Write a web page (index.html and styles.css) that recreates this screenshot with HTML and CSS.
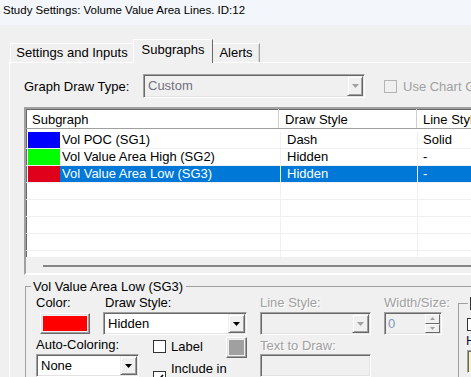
FILE: index.html
```html
<!DOCTYPE html>
<html lang="en">
<head>
    <meta charset="UTF-8">
    <title>Study Settings</title>
    <link rel="stylesheet" href="styles.css">
</head>
<body>
    <div class="titlebar">Study Settings: Volume Value Area Lines. ID:12</div>

    <div class="tabs">
        <div class="tab tab-settings">Settings and Inputs</div>
        <div class="tab tab-subgraphs selected">Subgraphs</div>
        <div class="tab tab-alerts">Alerts</div>
    </div>

    <div class="panel">
        <div class="draw-type">
            <span class="draw-type-label">Graph Draw Type:</span>
            <div class="combo disabled combo-type">
                <span class="combo-text">Custom</span>
                <span class="drop"><svg width="7" height="4"><polygon points="0,0 7,0 3.5,4"/></svg></span>
            </div>
            <div class="check disabled check-chart">
                <span class="box"></span>
                <span>Use Chart Graph Draw Type</span>
            </div>
        </div>

        <div class="listview">
            <div class="lv-head">
                <div class="lv-hcell">Subgraph</div>
                <div class="lv-hcell">Draw Style</div>
                <div class="lv-hcell">Line Style</div>
            </div>
            <div class="lv-body">
                <div class="lv-row">
                    <div class="lv-cell c1"><span class="swatch blue"></span><span class="name">Vol POC (SG1)</span></div>
                    <div class="lv-cell c2">Dash</div>
                    <div class="lv-cell c3">Solid</div>
                </div>
                <div class="lv-row">
                    <div class="lv-cell c1"><span class="swatch green"></span><span class="name">Vol Value Area High (SG2)</span></div>
                    <div class="lv-cell c2">Hidden</div>
                    <div class="lv-cell c3">-</div>
                </div>
                <div class="lv-row selected">
                    <div class="lv-cell c1"><span class="swatch red"></span><span class="name">Vol Value Area Low (SG3)</span></div>
                    <div class="lv-cell c2">Hidden</div>
                    <div class="lv-cell c3">-</div>
                </div>
                <div class="lv-row"><div class="lv-cell c1"></div><div class="lv-cell c2"></div><div class="lv-cell c3"></div></div>
                <div class="lv-row"><div class="lv-cell c1"></div><div class="lv-cell c2"></div><div class="lv-cell c3"></div></div>
                <div class="lv-row"><div class="lv-cell c1"></div><div class="lv-cell c2"></div><div class="lv-cell c3"></div></div>
                <div class="lv-row"><div class="lv-cell c1"></div><div class="lv-cell c2"></div><div class="lv-cell c3"></div></div>
                <div class="lv-row"><div class="lv-cell c1"></div><div class="lv-cell c2"></div><div class="lv-cell c3"></div></div>
            </div>
            <div class="hscroll"><div class="thumb"></div></div>
        </div>

        <fieldset class="group">
            <legend>Vol Value Area Low (SG3)</legend>
            <div class="fields">
                <span class="lbl f-color-lbl">Color:</span>
                <span class="lbl f-style-lbl">Draw Style:</span>
                <span class="lbl dim f-line-lbl">Line Style:</span>
                <span class="lbl dim f-width-lbl">Width/Size:</span>

                <div class="color-btn f-color"><span class="color-fill"></span></div>
                <div class="combo f-style">
                    <span class="combo-text">Hidden</span>
                    <span class="drop"><svg width="7" height="4"><polygon points="0,0 7,0 3.5,4"/></svg></span>
                </div>
                <div class="combo disabled f-line">
                    <span class="combo-text"></span>
                    <span class="drop"><svg width="7" height="4"><polygon points="0,0 7,0 3.5,4"/></svg></span>
                </div>
                <div class="spin f-width">
                    <span class="spin-text">0</span>
                    <span class="spin-btns">
                        <span class="spin-btn"><svg width="5" height="3"><polygon points="0,3 5,3 2.5,0"/></svg></span>
                        <span class="spin-btn"><svg width="5" height="3"><polygon points="0,0 5,0 2.5,3"/></svg></span>
                    </span>
                </div>

                <span class="lbl f-auto-lbl">Auto-Coloring:</span>
                <div class="check f-label"><span class="box"></span><span>Label</span></div>
                <div class="gray-btn f-gray"><span class="gray-fill"></span></div>
                <span class="lbl dim f-text-lbl">Text to Draw:</span>

                <div class="combo f-auto">
                    <span class="combo-text">None</span>
                    <span class="drop"><svg width="7" height="4"><polygon points="0,0 7,0 3.5,4"/></svg></span>
                </div>
                <div class="check f-include">
                    <span class="box checked"><svg width="11" height="11"><polyline points="2,5.5 4.5,8 9,3" fill="none" stroke="#000" stroke-width="1.6"/></svg></span>
                    <span>Include in<br>Autoscale</span>
                </div>
                <div class="textbox disabled f-text"></div>

                <fieldset class="subgroup f-right">
                    <legend><span class="box"></span></legend>
                    <span class="box sub-check"></span>
                    <span class="sub-h">H</span>
                    <div class="sub-field"></div>
                </fieldset>
            </div>
        </fieldset>
    </div>
</body>
</html>
```

FILE: styles.css
```css
*{
    margin:0;
    padding:0;
}
body{
    width: 471px;
    height: 377px;
    overflow: hidden;
    background: #f0f0f0;
    font-family: "Liberation Sans", Arial, sans-serif;
    font-size: 13px;
    color: #000;
}
.titlebar{
    height: 25px;
    background: #f3f6fb;
    font-size: 11.5px;
    line-height: 20px;
    padding-left: 3px;
    box-sizing: border-box;
    white-space: nowrap;
}

/* tabs */
.tabs{
    display: flex;
    align-items: flex-end;
    height: 23px;
    margin-top: 14px;
    padding-left: 10px;
}
.tab{
    box-sizing: border-box;
    height: 19px;
    padding-top: 1px;
    line-height: 16px;
    text-align: center;
    white-space: nowrap;
    border-top: 1px solid #fff;
    border-left: 1px solid #fff;
    border-right: 1px solid #a0a0a0;
}
.tab-settings{
    width: 123px;
    border-right: none;
}
.tab-subgraphs{
    width: 80px;
}
.tab-alerts{
    width: 47px;
    border-left: none;
    box-shadow: inset -1px 0 #d8d8d8;
}
.tab.selected{
    height: 24px;
    margin-bottom: -1px;
    padding-top: 2px;
    background: #f0f0f0;
    border-right-color: #696969;
    position: relative;
    z-index: 1;
}

/* panel */
.panel{
    margin-left: 9px;
    width: 600px;
    height: 400px;
    border-top: 1px solid #fff;
    border-left: 1px solid #fff;
    padding: 11px 0 0 14px;
}
.draw-type{
    display: flex;
    align-items: center;
    height: 24px;
    white-space: nowrap;
}
.draw-type-label{
    width: 119px;
}

/* combos and fields */
.combo, .spin, .textbox{
    display: flex;
    align-items: stretch;
    box-sizing: border-box;
    height: 23px;
    padding: 1px;
    background: #fff;
    border: 1px solid;
    border-color: #a0a0a0 #fff #fff #a0a0a0;
    box-shadow: inset 1px 1px #696969, inset -1px -1px #e3e3e3;
}
.combo.disabled, .textbox.disabled{
    background: #f0f0f0;
}
.combo-text{
    flex: 1;
    padding-left: 3px;
    line-height: 19px;
    white-space: nowrap;
}
.combo.disabled .combo-text{
    color: #70707e;
}
.drop{
    width: 17px;
    display: flex;
    align-items: center;
    justify-content: center;
    box-sizing: border-box;
    background: #f0f0f0;
    border: 1px solid;
    border-color: #f0f0f0 #696969 #696969 #f0f0f0;
    box-shadow: inset 1px 1px #fff, inset -1px -1px #a0a0a0;
}
.drop svg{
    fill: #000;
}
.combo.disabled .drop svg{
    fill: #a0a0a0;
}
.combo-type{
    width: 222px;
    height: 24px;
}
.combo-type .drop{
    width: 16px;
}

/* check boxes */
.check{
    display: flex;
    align-items: center;
    white-space: nowrap;
}
.box{
    display: inline-block;
    box-sizing: border-box;
    width: 13px;
    height: 13px;
    border: 1px solid #333;
    background: #fff;
    flex-shrink: 0;
}
.check .box{
    margin-right: 5px;
}
.check.disabled{
    color: #a0a0a0;
}
.check.disabled .box{
    border-color: #b4b4b4;
    background: #f0f0f0;
}
.check-chart{
    margin-left: 19px;
    margin-top: 1px;
}
.check-chart .box{
    margin-right: 6px;
}
.box.checked svg{
    display: block;
}

/* list view */
.listview{
    margin-top: 9px;
    border: 2px solid;
    border-color: #a0a0a0 #fff #fff #a0a0a0;
    box-shadow: inset 1px 1px #696969, inset -1px -1px #e3e3e3;
    background: #fff;
}
.lv-head{
    display: grid;
    grid-template-columns: 253px 138px 1fr;
    height: 20px;
    box-sizing: border-box;
    border-bottom: 1px solid #a0a0a0;
    margin-left: -1px;
    padding-left: 1px;
}
.lv-hcell{
    padding: 3px 0 0 6px;
    line-height: 16px;
    border-right: 1px solid #d0d0d0;
    white-space: nowrap;
}
.lv-body{
    margin-top: 3px;
    height: 125px;
    overflow: hidden;
}
.lv-row{
    display: grid;
    grid-template-columns: 255px 137px 1fr;
    height: 17px;
}
.lv-cell{
    box-sizing: border-box;
    border-right: 1px solid #f0f0f0;
    border-bottom: 1px solid #f0f0f0;
    line-height: 16px;
    white-space: nowrap;
    padding-left: 6px;
}
.lv-cell.c1{
    display: flex;
    padding-left: 2px;
}
.lv-cell.c3{
    padding-left: 5px;
}
.swatch{
    width: 32px;
    height: 16px;
    flex-shrink: 0;
}
.swatch.blue{
    background: #0000ff;
}
.swatch.green{
    background: #00ff00;
}
.swatch.red{
    background-color: #e0001c;
}
.name{
    flex: 1;
    padding-left: 2px;
}
.lv-row.selected .name,
.lv-row.selected .c2,
.lv-row.selected .c3{
    background: #0078d7;
    color: #fff;
}
.hscroll{
    height: 16px;
    box-sizing: border-box;
    padding-top: 8px;
    background: #f0f0f0;
}
.thumb{
    margin-left: 17px;
    height: 2px;
    background: #858585;
}

/* group box */
.group{
    margin: 4px 0 0 1px;
    width: 560px;
    height: 140px;
    padding: 0 0 0 5px;
    border: 1px solid #a0a0a0;
}
.group > legend{
    padding: 0 3px 0 2px;
    line-height: 15px;
}
.fields{
    margin-left: 5px;
    display: grid;
    grid-template-columns: 4px 50px 13px 36px 14px 73px 21px 13px 111px 13px 58px 16px 60px;
    grid-template-rows: 18px 23px 18px 40px;
}
.lbl{
    line-height: 16px;
    padding-top: 1px;
    white-space: nowrap;
}
.dim{
    color: #a0a0a0;
    text-shadow: 1px 1px 0 #fff;
}
.f-color-lbl{ grid-column: 1 / 4; grid-row: 1; }
.f-style-lbl{ grid-column: 4 / 9; grid-row: 1; padding-left: 2px; }
.f-line-lbl{ grid-column: 9 / 11; grid-row: 1; }
.f-width-lbl{ grid-column: 11 / 13; grid-row: 1; }
.f-color{ grid-column: 2 / 3; grid-row: 2; }
.f-style{ grid-column: 4 / 8; grid-row: 2; }
.f-line{ grid-column: 9 / 10; grid-row: 2; }
.f-width{ grid-column: 11 / 12; grid-row: 2; }
.f-auto-lbl{ grid-column: 1 / 6; grid-row: 3; padding-top: 2px; }
.f-label{ grid-column: 6 / 7; grid-row: 3; align-self: start; margin-top: 4px; }
.f-gray{ grid-column: 7 / 8; grid-row: 3; }
.f-text-lbl{ grid-column: 9 / 11; grid-row: 3; padding-top: 3px; }
.f-auto{ grid-column: 1 / 5; grid-row: 4; margin-top: 1px; }
.f-include{ grid-column: 6 / 8; grid-row: 4; align-self: start; margin-top: 8px; }
.f-include span:last-child{
    line-height: 16px;
}
.f-text{ grid-column: 9 / 10; grid-row: 4; margin-top: 1px; }
.f-right{ grid-column: 13 / 14; grid-row: 1 / 5; }

.color-btn, .gray-btn{
    box-sizing: border-box;
    display: flex;
    padding: 2px;
    background: #f0f0f0;
    border: 1px solid;
    border-color: #fff #696969 #696969 #fff;
    box-shadow: inset -1px -1px #a0a0a0, inset 1px 1px #e3e3e3;
}
.color-btn{
    height: 21px;
    margin-top: 1px;
}
.color-fill{
    flex: 1;
    background: #ff0000;
}
.gray-btn{
    width: 21px;
    height: 21px;
    margin-top: 2px;
}
.gray-fill{
    flex: 1;
    background: #a0a0a0;
}
.f-style .combo-text{
    padding-left: 3px;
}

.spin{
    background: #f0f0f0;
}
.spin-text{
    flex: 1;
    padding-left: 2px;
    line-height: 19px;
    color: #8494c0;
}
.spin-btns{
    width: 15px;
    display: flex;
    flex-direction: column;
}
.spin-btn{
    flex: 1;
    display: flex;
    align-items: center;
    justify-content: center;
    box-sizing: border-box;
    border: 1px solid;
    border-color: #fff #696969 #696969 #fff;
}
.spin-btn svg{
    fill: #a0a0a0;
}

/* partly visible group at the right edge */
.subgroup{
    margin-top: 3px;
    height: 100px;
    padding: 0 0 0 6px;
    border: 1px solid #a0a0a0;
}
.subgroup > legend{
    margin-left: 3px;
    padding: 0 2px;
    line-height: 13px;
}
.subgroup > legend .box{
    display: block;
}
.sub-check{
    display: block;
    margin: 8px 0 0 2px;
}
.sub-h{
    display: block;
    margin: 2px 0 0 1px;
    line-height: 16px;
    color: #101040;
}
.sub-field{
    margin: 1px 0 0 2px;
    width: 30px;
    height: 23px;
    box-sizing: border-box;
    border: 1px solid;
    border-color: #a0a0a0 #fff #fff #a0a0a0;
    box-shadow: inset 1px 1px #696969, inset 3px 3px #f7f3c0;
    background: #fff;
}
```
